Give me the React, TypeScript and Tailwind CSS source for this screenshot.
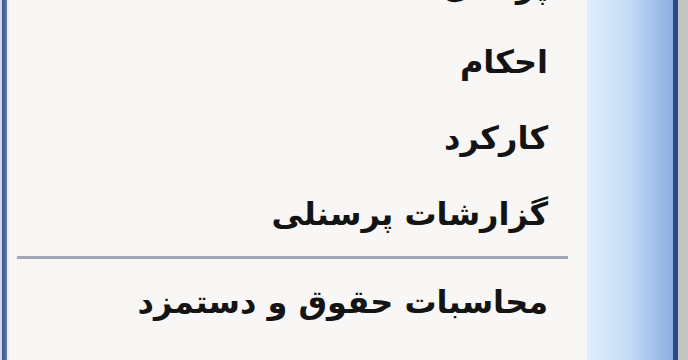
const items = ['پرسنل', 'احکام', 'کارکرد', 'گزارشات پرسنلی'];
const items2 = ['محاسبات حقوق و دستمزد', 'گزارشات حقوقی'];

const MenuItem = ({ label }: { label: string }) => (
  <div className="h-[76px] flex items-center pr-[39px] text-[32px] font-bold leading-none text-[#141414]">
    <span>{label}</span>
  </div>
);

export default function App() {
  return (
    <div className="w-[688px] h-[360px] overflow-hidden flex bg-[#c6c6c6] font-['DejaVu_Sans',sans-serif]">
      <div className="w-[2px] bg-[#cfdcf0]" />
      <div className="w-[5px] bg-gradient-to-r from-[#3c5487] to-[#6a7fa8]" />
      <div className="w-[2px] bg-[#e8f0fb]" />
      <div dir="rtl" className="w-[578px] bg-[#f8f7f5] flex flex-col">
        <div className="-mt-[52px]">
          {items.map((l) => (
            <MenuItem key={l} label={l} />
          ))}
        </div>
        <div className="h-[20px] mt-[4px] flex items-center pr-[19px] pl-[8px]">
          <div className="h-[3px] w-full bg-[#a0a8b8]" />
        </div>
        <div className="mt-[5px]">
          {items2.map((l) => (
            <MenuItem key={l} label={l} />
          ))}
        </div>
      </div>
      <div className="w-[86px] bg-gradient-to-r from-[#e2eefc] via-[#c4dbf6] to-[#8aaedf]" />
      <div className="w-[5px] bg-[#2c4a86]" />
      <div className="flex-1 bg-[#c4c4c4]" />
    </div>
  );
}
